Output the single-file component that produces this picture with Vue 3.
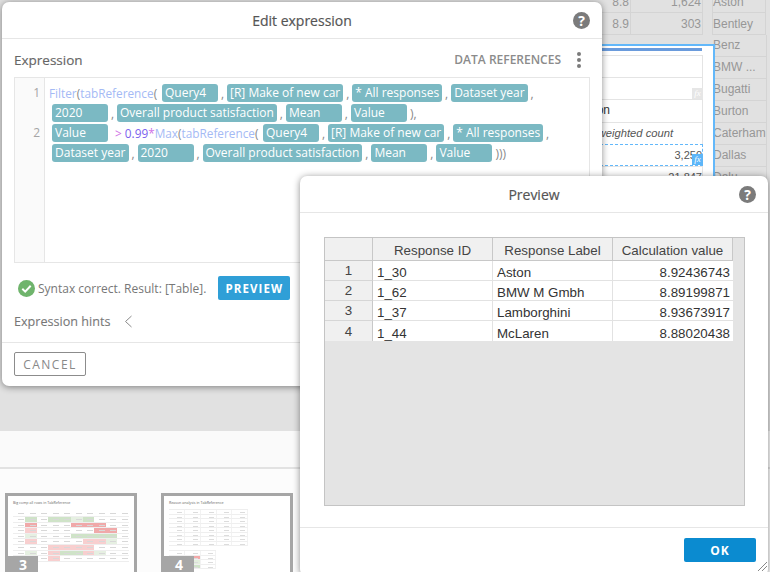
<script setup>
const line1 = [
  { c: 'Query4' }, { s: ',' }, { c: '[R] Make of new car' }, { s: ',' }, { c: '* All responses' }, { s: ',' }, { c: 'Dataset year' }, { s: ',' }
]
const line2 = [
  { c: '2020' }, { s: ',' }, { c: 'Overall product satisfaction' }, { s: ',' }, { c: 'Mean' }, { s: ',' }, { c: 'Value' }, { s: '),', wide: true }
]
const line3 = [
  { c: 'Query4' }, { s: ',' }, { c: '[R] Make of new car' }, { s: ',' }, { c: '* All responses' }, { s: ',' }
]
const line4 = [
  { c: 'Dataset year' }, { s: ',' }, { c: '2020' }, { s: ',' }, { c: 'Overall product satisfaction' }, { s: ',' }, { c: 'Mean' }, { s: ',' }, { c: 'Value' }, { s: ')))', wide: true }
]
const rows = [
  ['1', '1_30', 'Aston', '8.92436743'],
  ['2', '1_62', 'BMW M Gmbh', '8.89199871'],
  ['3', '1_37', 'Lamborghini', '8.93673917'],
  ['4', '1_44', 'McLaren', '8.88020438']
]
const makes = ['Benz', 'BMW ...', 'Bugatti', 'Burton', 'Caterham', 'Dallas', 'Dalu']
const heat = [
  '..........',
  '.g.ggqg...',
  '.r...rrr..',
  '.p.....rr.',
  '.q...gggg.',
  '.p....ppq.',
  '...pppp...',
  '.q.pggpq..',
  '...p......'
]
const tint = { g: '#cfe3c8', q: '#e6f0e2', r: '#f0a9a9', p: '#f8cfcf', '.': '#ffffff' }
const heatCells = heat.flatMap((r) => r.split('').map((k) => tint[k]))
const sheet = Array.from({ length: 40 }, (_, i) => i)
const sheetTwo = ['#fff', '#fff', '#fff', '#fff', '#f4a9a9', '#fff', '#fff', '#e3efdd', '#fff', '#fff', '#cfe3c8', '#fff']
</script>

<template>
  <div class="stage">
    <div class="backdrop">
      <div class="back-sheet">
        <div class="back-num one">8.8</div><div class="back-num two">1,624</div><div class="back-name">Aston</div>
        <div class="back-num one">8.9</div><div class="back-num two">303</div><div class="back-name">Bentley</div>
      </div>
      <div class="makes">
        <div v-for="m in makes" :key="m" class="make">{{ m }}</div>
      </div>
      <div class="selected">
        <div class="sel-bar"></div>
        <div class="sel-row"></div>
        <div class="sel-row"><span class="fx">fx</span></div>
        <div class="sel-row bold">on</div>
        <div class="sel-row ital">weighted count</div>
        <div class="sel-row dashed">3,250<span class="fx on">fx</span></div>
        <div class="sel-row">21,847</div>
      </div>
    </div>

    <div class="page">
      <div class="strip"></div>
      <div class="thumbs">
        <div class="thumb">
          <div class="thumb-title">Big comp all rows in TabReference</div>
          <div class="heat">
            <i v-for="(t, i) in heatCells" :key="i" :style="{ background: t }"></i>
          </div>
          <div class="thumb-no">3</div>
        </div>
        <div class="thumb">
          <div class="thumb-title">Reason analysis in TabReference</div>
          <div class="sheet">
            <i v-for="i in sheet" :key="i"></i>
          </div>
          <div class="sheet two">
            <i v-for="(t, i) in sheetTwo" :key="i" :style="{ background: t }"></i>
          </div>
          <div class="thumb-no">4</div>
        </div>
      </div>
    </div>

    <section class="modal edit">
      <header class="m-head">
        <h2>Edit expression</h2>
        <span class="help">?</span>
      </header>
      <div class="m-body">
        <div class="expr-head">
          <span class="expr-label">Expression</span>
          <span class="refs">DATA REFERENCES</span>
          <span class="kebab"><i></i><i></i><i></i></span>
        </div>
        <div class="editor">
          <div class="gutter">
            <div class="ln">1</div>
            <div class="ln"></div>
            <div class="ln">2</div>
          </div>
          <div class="code">
            <div class="line first">
              <span class="lead"><span class="fn">Filter</span><span class="pn">(</span><span class="fn">tabReference</span><span class="pn">(</span></span>
              <template v-for="(t, i) in line1" :key="i">
                <span v-if="t.c" class="chip">{{ t.c }}</span>
                <span v-else class="sep">{{ t.s }}</span>
              </template>
            </div>
            <div class="line">
              <template v-for="(t, i) in line2" :key="i">
                <span v-if="t.c" class="chip">{{ t.c }}</span>
                <span v-else class="sep" :class="{ wide: t.wide }">{{ t.s }}</span>
              </template>
            </div>
            <div class="line">
              <span class="chip">Value</span>
              <span class="ops"><span class="op">&gt;</span> <span class="num">0.99</span><span class="op">*</span><span class="fn">Max</span><span class="pn">(</span><span class="fn">tabReference</span><span class="pn">(</span></span>
              <template v-for="(t, i) in line3" :key="i">
                <span v-if="t.c" class="chip">{{ t.c }}</span>
                <span v-else class="sep">{{ t.s }}</span>
              </template>
            </div>
            <div class="line">
              <template v-for="(t, i) in line4" :key="i">
                <span v-if="t.c" class="chip">{{ t.c }}</span>
                <span v-else class="sep" :class="{ wide: t.wide }">{{ t.s }}</span>
              </template>
            </div>
          </div>
        </div>
        <div class="status">
          <svg class="check" width="17" height="17" viewBox="0 0 17 17">
            <circle cx="8.5" cy="8.5" r="8.5" fill="#6fb46c" />
            <path d="M4.3 8.8 7.2 11.6 12.7 5.8" fill="none" stroke="#fff" stroke-width="2" />
          </svg>
          <span class="status-text">Syntax correct. Result: [Table].</span>
          <button class="btn-preview">PREVIEW</button>
        </div>
        <div class="hints">
          <span>Expression hints</span>
          <svg width="9" height="13" viewBox="0 0 9 13">
            <path d="M7.5 1 1.5 6.5 7.5 12" fill="none" stroke="#8a8a8a" stroke-width="1" />
          </svg>
        </div>
      </div>
      <footer class="m-foot">
        <button class="btn-cancel">CANCEL</button>
      </footer>
    </section>

    <section class="modal preview">
      <header class="m-head">
        <h2>Preview</h2>
        <span class="help">?</span>
      </header>
      <div class="p-body">
        <div class="grid-wrap">
          <table>
            <thead>
              <tr>
                <th class="corner"></th>
                <th>Response ID</th>
                <th>Response Label</th>
                <th>Calculation value</th>
              </tr>
            </thead>
            <tbody>
              <tr v-for="r in rows" :key="r[0]">
                <th class="rh">{{ r[0] }}</th>
                <td>{{ r[1] }}</td>
                <td>{{ r[2] }}</td>
                <td class="val">{{ r[3] }}</td>
              </tr>
            </tbody>
          </table>
        </div>
      </div>
      <footer class="p-foot">
        <button class="btn-ok">OK</button>
      </footer>
      <svg class="grip" width="11" height="11" viewBox="0 0 11 11">
        <path d="M1 10 10 1M5 10 10 5" stroke="#888" stroke-width="1" fill="none" />
      </svg>
    </section>
  </div>
</template>

<style>
html, body { margin: 0; padding: 0; overflow: hidden; }
</style>

<style scoped>
.stage {
  position: relative;
  width: 770px;
  height: 572px;
  overflow: hidden;
  background: #e1e1e1;
  font-family: "Open Sans", "Liberation Sans", sans-serif;
}
.backdrop { position: absolute; left: 0; top: 0; width: 770px; height: 431px; }
.back-sheet {
  position: absolute;
  left: 560px;
  top: -9px;
  display: grid;
  grid-template-columns: 71px 72px 63px;
  grid-auto-rows: 22px;
  font: 12px "Liberation Sans", sans-serif;
  color: #979797;
}
.back-sheet > div { border-bottom: 1px solid #d4d4d4; display: flex; align-items: center; box-sizing: border-box; }
.back-num { justify-content: flex-end; padding-right: 1px; border-right: 1px solid #d4d4d4; }
.back-name { border-left: 1px solid #d4d4d4; margin-left: 9px; border-right: 1px solid #d4d4d4; }
.makes {
  position: absolute;
  left: 713px;
  top: 35px;
  width: 54px;
  box-sizing: border-box;
  border-right: 1px solid #d4d4d4;
  font: 12px "Liberation Sans", sans-serif;
  color: #979797;
}
.make { height: 22px; line-height: 21px; border-bottom: 1px solid #d4d4d4; box-sizing: border-box; white-space: nowrap; }
.selected {
  position: absolute;
  left: 560px;
  top: 44px;
  width: 155px;
  height: 140px;
  box-sizing: border-box;
  border: 2px solid #63b8fa;
  border-left: 0;
  border-bottom: 0;
  background: #fff;
  padding: 2px 10px 0 0;
  font: 11px "Liberation Sans", sans-serif;
  color: #555;
}
.sel-bar { height: 3px; background: #6a9bdc; margin-bottom: 4px; margin-right: 1px; }
.sel-row {
  position: relative;
  height: 22.2px;
  box-sizing: border-box;
  border-top: 1px solid #e4e4e4;
  border-right: 1px solid #e4e4e4;
  line-height: 21px;
  text-align: right;
  padding-right: 0;
  white-space: nowrap;
}
.sel-row.bold { padding-right: 92px; color: #333; font-size: 12px; }
.sel-row.ital { font-style: italic; padding-right: 29px; font-size: 11.2px; }
.sel-row.dashed { border-top: 1px dashed #63b8fa; border-bottom: 1px dashed #63b8fa; border-right: 1px dashed #63b8fa; }
.fx {
  position: absolute;
  right: -1px;
  bottom: 0;
  width: 11px;
  height: 11px;
  background: #e6e6e6;
  color: #fff;
  font: italic 9px/11px "Liberation Serif", serif;
  text-align: center;
}
.fx.on { background: #5db6f8; }

.page { position: absolute; left: 0; right: 0; top: 431px; bottom: 0; background: #fcfcfc; }
.strip { height: 36px; background: #fafafa; border-bottom: 2px solid #e2e2e2; }
.thumbs { display: flex; gap: 24px; padding: 24px 0 0 5px; }
.thumb {
  position: relative;
  flex: none;
  width: 132px;
  height: 90px;
  box-sizing: border-box;
  border: 3px solid #a6a6a6;
  background: #fff;
  padding: 4px 5px;
  overflow: hidden;
}
.thumb-title { font-size: 3.6px; line-height: 6px; color: #666; white-space: nowrap; }
.heat {
  display: grid;
  grid-template-columns: 12px repeat(9, 11.5px);
  grid-auto-rows: 5.6px;
  margin-top: 5.4px;
}
.heat i { position: relative; display: block; border-bottom: 1px solid #eeeeee; }
.heat i::after {
  content: "";
  position: absolute;
  right: 1px;
  top: 2px;
  width: 6px;
  height: 1px;
  background: #d8d8d8;
}
.sheet {
  display: grid;
  grid-template-columns: 16px 16px 16px 15px 16px;
  grid-auto-rows: 4.5px;
  margin-top: 3px;
  width: 79px;
  border-top: 1px solid #eeeeee;
}
.sheet.two { grid-template-columns: 16px 16px 15px; width: 47px; margin-top: 4px; }
.sheet i { position: relative; display: block; border-bottom: 1px solid #efefef; border-right: 1px solid #f2f2f2; }
.sheet i::after {
  content: "";
  position: absolute;
  right: 2px;
  top: 2px;
  width: 5px;
  height: 1px;
  background: #dcdcdc;
}
.thumb-no {
  position: absolute;
  left: -3px;
  top: 60px;
  width: 33px;
  height: 16px;
  background: #a6a6a6;
  color: #fff;
  font-size: 14px;
  font-weight: 700;
  line-height: 17px;
  text-align: center;
  padding-left: 3px;
  box-sizing: border-box;
}

.modal {
  position: absolute;
  display: flex;
  flex-direction: column;
  background: #fff;
  border-radius: 7px;
  box-shadow: 0 1px 7px rgba(0, 0, 0, .45);
}
.edit { left: 2px; top: 2px; width: 600px; height: 384px; }
.preview { left: 300px; top: 176px; width: 468px; height: 400px; }
.m-head {
  position: relative;
  flex: none;
  height: 36px;
  border-bottom: 1px solid #e6e6e6;
  display: flex;
  align-items: center;
  justify-content: center;
}
h2 { margin: 0; font-size: 14px; font-weight: 400; color: #555; -webkit-text-stroke: .2px #555; }
.help {
  position: absolute;
  right: 12px;
  top: 10px;
  width: 17px;
  height: 17px;
  border-radius: 50%;
  background: #7b7b7b;
  color: #fff;
  font-size: 14px;
  font-weight: 700;
  line-height: 17px;
  text-align: center;
}
.m-body { flex: 1; padding: 0 12px; display: flex; flex-direction: column; }
.expr-head { display: flex; align-items: center; height: 38px; box-sizing: border-box; padding-top: 3px; }
.expr-label { font-size: 13.5px; color: #666; -webkit-text-stroke: .15px #666; }
.refs { margin-left: auto; font-size: 12px; font-weight: 600; color: #8b8b8b; margin-right: 16px; }
.kebab { display: flex; flex-direction: column; gap: 2px; width: 4px; margin-right: 9px; }
.kebab i { display: block; width: 4px; height: 4px; border-radius: 50%; background: #7b7b7b; }
.editor {
  display: flex;
  height: 186px;
  border: 1px solid #e6e6e6;
  box-sizing: border-box;
}
.gutter {
  flex: none;
  width: 30px;
  box-sizing: border-box;
  background: #fafafa;
  border-right: 1px solid #e6e6e6;
  padding-top: 5px;
}
.ln { height: 20px; line-height: 20px; font-size: 12px; color: #a5a5a5; text-align: right; padding-right: 4px; }
.code { padding: 5px 0 0 7px; font-size: 12px; }
.line { display: flex; align-items: center; height: 20px; white-space: nowrap; color: #777; }
.line.first { margin-left: -3px; }
.fn { color: #a4baf5; }
.pn { color: #888; }
.op { color: #cf6fe6; }
.num { color: #7a5fee; }
.lead { display: block; width: 113px; font-size: 11.8px; }
.ops { display: block; width: 148px; margin: 0 0 0 7px; white-space: pre; font-size: 11.8px; }
.chip {
  box-sizing: border-box;
  min-width: 56px;
  height: 18px;
  padding: 0 3px;
  border-radius: 3px;
  background: #7bb9c3;
  color: #fff;
  font-size: 12px;
  line-height: 18px;
}
.sep { width: 9px; text-align: center; color: #888; }
.sep.wide { width: auto; margin-left: 3px; }
.status { display: flex; align-items: center; height: 24px; margin-top: 13px; padding-left: 4px; }
.status-text { font-size: 12px; color: #777; margin-left: 3px; }
.btn-preview {
  margin-left: 12px;
  width: 72px;
  height: 24px;
  border: 0;
  border-radius: 2px;
  background: #2f9fd7;
  color: #fff;
  font: 700 11.5px "Open Sans", sans-serif;
  letter-spacing: 1.1px;
  padding: 0;
}
.hints { display: flex; align-items: center; gap: 14px; height: 20px; margin-top: 11px; font-size: 12.6px; color: #777; -webkit-text-stroke: .1px #777; }
.m-foot { flex: none; height: 44px; border-top: 1px solid #e6e6e6; padding: 9px 12px 0; box-sizing: border-box; }
.btn-cancel {
  display: block;
  width: 72px;
  height: 24px;
  box-sizing: border-box;
  border: 1px solid #8c8c8c;
  border-radius: 2px;
  background: #fff;
  color: #888;
  font: 400 12px "Open Sans", sans-serif;
  letter-spacing: 1.5px;
  padding: 0;
}
.p-body { flex: none; height: 315px; padding: 24px 23px 0 24px; box-sizing: border-box; border-bottom: 1px solid #e6e6e6; }
.grid-wrap { height: 269px; box-sizing: border-box; border: 1px solid #c4c4c4; background: #e4e4e4; }
table {
  border-collapse: separate;
  border-spacing: 0;
  table-layout: fixed;
  width: 408px;
  font: 13.33px "Liberation Sans", sans-serif;
  color: #333;
}
th, td { padding: 0; box-sizing: border-box; border-right: 1px solid #cfcfcf; border-bottom: 1px solid #e2e2e2; }
thead th {
  height: 23px;
  padding-top: 3px;
  background: #f0f0f0;
  font-weight: 400;
  color: #444;
  border-bottom: 1px solid #c8c8c8;
  border-right-color: #c8c8c8;
}
.corner { width: 48px; }
.rh { height: 20px; background: #f0f0f0; font-weight: 400; border-right-color: #c8c8c8; border-bottom-color: #d6d6d6; color: #444; line-height: 15px; vertical-align: middle; }
td { height: 20px; background: #fff; padding: 5px 4px 0 4px; line-height: 14px; white-space: nowrap; border-right-color: #e2e2e2; }
td.val { text-align: right; padding-right: 3px; border-right: 0; }
tbody tr:last-child td, tbody tr:last-child th { border-bottom: 0; }
.p-foot { flex: none; padding: 10px 12px 0 0; display: flex; justify-content: flex-end; }
.btn-ok {
  width: 72px;
  height: 24px;
  border: 0;
  border-radius: 2px;
  background: #0b8bd0;
  color: #fff;
  font: 700 12px "Open Sans", sans-serif;
  letter-spacing: 1px;
  padding: 0;
}
.grip { position: absolute; right: 0; top: 385px; }
</style>
